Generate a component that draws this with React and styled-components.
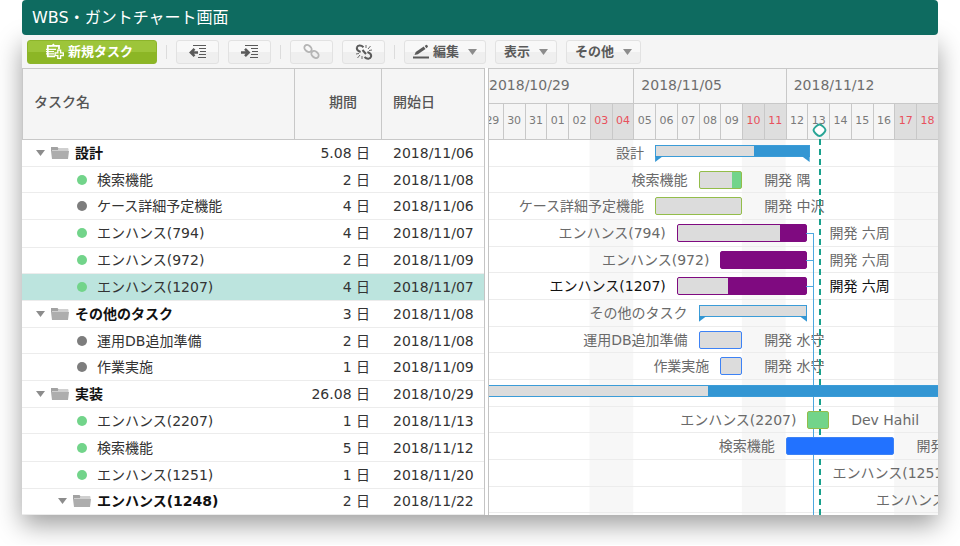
import React, { useState } from "react";
import styled, { createGlobalStyle } from "styled-components";

const GlobalStyle = createGlobalStyle`
  * {
    box-sizing: border-box;
  }
  body {
    margin: 0;
    background: #fff;
    overflow-x: hidden;
    font-family: "DejaVu Sans", "Noto Sans CJK JP", sans-serif;
    font-size: 14px;
    line-height: 18px;
    color: #333;
  }
  button {
    font-family: inherit;
    cursor: pointer;
  }
`;

//page frame
const Page = styled.main`
  padding: 0 22px 30px;
`;

const TitleBar = styled.h1`
  position: relative;
  z-index: 1;
  margin: 0;
  padding: 0 10px;
  background: #0e6b60;
  border-radius: 4px;
  color: #fff;
  font-size: 16px;
  font-weight: 400;
  line-height: 35px;
`;

const Panel = styled.section`
  background: #fff;
  box-shadow: 0 10px 24px rgba(0, 0, 0, 0.38);
`;

//toolbar
const Toolbar = styled.div`
  display: flex;
  align-items: center;
  gap: 9px;
  height: 33px;
  padding: 0 5px;
  background: #f5f5f5;
`;

const Separator = styled.span`
  width: 1px;
  height: 14px;
  background: #dcdcdc;
`;

const ToolButton = styled.button`
  display: flex;
  align-items: center;
  justify-content: center;
  gap: 9px;
  height: 24px;
  min-width: 43px;
  padding: 0 8px;
  border: 1px solid #e2e2e2;
  border-radius: 3px;
  background: linear-gradient(#f8f8f8 50%, #efefef 50%);
  color: #5a5a5a;
  font-size: 13px;
  font-weight: 700;
  line-height: 18px;

  svg {
    flex: none;
  }
  &:disabled {
    color: #b5b5b5;
    cursor: default;
  }
`;

const IconText = styled.span`
  display: flex;
  align-items: center;
  gap: 4px;
`;

const NewTaskButton = styled(ToolButton)`
  padding: 0 23px 0 18px;
  border-color: #8db52b;
  background: linear-gradient(#9dc53a 50%, #8cb625 50%);
  color: #fff;
`;

//split view
const Split = styled.div`
  display: grid;
  grid-template-columns: minmax(0, 463fr) minmax(0, 453fr);
`;

const TaskTable = styled.table`
  width: 100%;
  table-layout: fixed;
  border-collapse: separate;
  border-spacing: 0;
  border-right: 1px solid #c4c4c4;
`;

const HeadCell = styled.th`
  width: ${(props) => props.$width};
  height: 72px;
  padding: 0 ${(props) => (props.$end ? "24px" : "11px")} 4px 11px;
  border-top: 1px solid #c8c8c8;
  border-bottom: 1px solid #c8c8c8;
  border-left: 1px solid #c8c8c8;
  background: #f5f5f5;
  color: #555;
  font-weight: 500;
  text-align: ${(props) => (props.$end ? "right" : "left")};
`;

const TaskRow = styled.tr`
  height: 27px;
  background: ${(props) => (props.$selected ? "#bce4de" : "#fff")};
  cursor: pointer;

  &:nth-child(3n + 2) {
    height: 26px;
  }
`;

const Cell = styled.td`
  padding: 0 11px 0 12px;
  border-bottom: 1px solid #ececec;
  text-align: ${(props) => (props.$end ? "right" : "left")};
  white-space: nowrap;
`;

const NameCell = styled(Cell)`
  padding: 0 0 0 ${(props) => props.$indent}px;
`;

const TaskName = styled.div`
  display: flex;
  align-items: center;
  gap: ${(props) => (props.$group ? "6px" : "10px")};
  color: ${(props) => (props.$group ? "#111" : "#333")};
  font-weight: ${(props) => (props.$group ? 700 : 400)};
`;

const Toggle = styled.button`
  display: flex;
  padding: 0;
  border: 0;
  background: none;
`;

const Dot = styled.span`
  width: 10px;
  height: 10px;
  border-radius: 50%;
  background: ${(props) => (props.$active ? "#72d48a" : "#7d7d7d")};
`;

//gantt chart
const Chart = styled.div`
  margin-left: 3px;
  border-left: 1px solid #c4c4c4;
  overflow: hidden;
`;

const Timeline = styled.div`
  margin-left: -8px;
`;

const Weeks = styled.div`
  display: grid;
  grid-template-columns: repeat(3, 1fr);
  height: 72px;
  border-top: 1px solid #c8c8c8;
  border-bottom: 1px solid #c8c8c8;
  background: #f5f5f5;
`;

const Week = styled.div`
  display: grid;
  grid-template-rows: 35px 35px;
`;

const WeekLabel = styled.div`
  padding-left: 7px;
  border-bottom: 1px solid #c8c8c8;
  border-left: 1px solid #c8c8c8;
  color: #6e6e6e;
  line-height: 33px;
`;

const Days = styled.div`
  display: grid;
  grid-template-columns: repeat(7, 1fr);
`;

const Day = styled.div`
  border-left: 1px solid #c8c8c8;
  background: ${(props) => (props.$weekend ? "#dedede" : "#f5f5f5")};
  color: ${(props) => (props.$weekend ? "#e8515c" : "#7a7a7a")};
  font-size: 11px;
  line-height: 33px;
  text-align: center;
`;

const ChartBody = styled.div`
  position: relative;
  padding-bottom: 2px;
  background: linear-gradient(90deg, transparent 71.4%, #f7f7f7 71.4%) 0 0 /
    33.33% 100%;
`;

const ChartRow = styled.div`
  display: flex;
  align-items: center;
  height: 27px;
  border-bottom: 1px solid #ececec;
  color: ${(props) => (props.$selected ? "#111" : "#6a6a6a")};
  white-space: nowrap;

  &:nth-child(3n + 2) {
    height: 26px;
  }
`;

const Label = styled.span`
  flex: none;
  width: ${(props) => (props.$days / 21) * 100}%;
  padding-right: 11px;
  text-align: right;
`;

const Bar = styled.span`
  position: relative;
  z-index: 2;
  flex: none;
  width: ${(props) => (props.$days / 21) * 100}%;
  height: 18px;
  border: 1px solid ${(props) => props.$line};
  border-radius: 2px;
  background: linear-gradient(
    90deg,
    #dcdcdc ${(props) => props.$rest}%,
    ${(props) => props.$fill} ${(props) => props.$rest}%
  );

  &::after {
    content: "";
    display: ${(props) => (props.$linked ? "block" : "none")};
    position: absolute;
    top: 8px;
    left: 100%;
    width: 7px;
    height: 1px;
    background: #4fa8e0;
  }
`;

const SummaryBar = styled(Bar)`
  align-self: flex-start;
  height: 12px;
  margin-top: 5px;
  border-radius: 0;

  &::before,
  &::after {
    content: "";
    display: block;
    position: absolute;
    top: 10px;
    width: 8px;
    height: 6px;
    background: #3396d3;
  }
  &::before {
    left: -1px;
    clip-path: polygon(0 0, 100% 0, 0 100%);
  }
  &::after {
    left: auto;
    right: -1px;
    clip-path: polygon(0 0, 100% 0, 100% 100%);
  }
`;

const Assignee = styled.span`
  padding-left: 22px;
`;

const LinkLine = styled.span`
  position: absolute;
  top: 93px;
  bottom: 0;
  left: calc(${(15 / 21) * 100}% + 6px);
  width: 1px;
  background: #4fa8e0;
`;

const TodayLine = styled.span`
  position: absolute;
  z-index: 1;
  top: -1px;
  bottom: 0;
  left: calc(${(15.5 / 21) * 100}% + 1px);
  width: 2px;
  background: repeating-linear-gradient(#17a08c 0 6px, transparent 6px 10px);
`;

const TodayPin = styled.svg`
  position: absolute;
  z-index: 3;
  top: -17px;
  left: calc(${(15.5 / 21) * 100}% - 6px);
`;

const COLORS = {
  summary: { line: "#3b9cd8", fill: "#3396d3" },
  green: { line: "#93bd4a", fill: "#72d48a" },
  purple: { line: "#7f0a80", fill: "#7f0a80" },
  blue: { line: "#3d82f5", fill: "#2272ff" },
};

// start and span are in days from 2018/10/29, rest is the grey part in percent
const tasks = [
  { name: "設計", group: true, level: 0, days: "5.08", date: "2018/11/06", start: 8, span: 7.1, rest: 64 },
  { name: "検索機能", active: true, days: "2", date: "2018/11/08", start: 10, span: 2, rest: 78, color: "green", who: "開発 隅" },
  { name: "ケース詳細予定機能", days: "4", date: "2018/11/06", start: 8, span: 4, rest: 100, color: "green", who: "開発 中沢" },
  { name: "エンハンス(794)", active: true, days: "4", date: "2018/11/07", start: 9, span: 6, rest: 80, color: "purple", who: "開発 六周", linked: true },
  { name: "エンハンス(972)", active: true, days: "2", date: "2018/11/09", start: 11, span: 4, rest: 0, color: "purple", who: "開発 六周", linked: true },
  { name: "エンハンス(1207)", active: true, days: "4", date: "2018/11/07", start: 9, span: 6, rest: 39, color: "purple", who: "開発 六周", linked: true },
  { name: "その他のタスク", group: true, level: 0, days: "3", date: "2018/11/08", start: 10, span: 5, rest: 100 },
  { name: "運用DB追加準備", days: "2", date: "2018/11/08", start: 10, span: 2, rest: 100, color: "blue", who: "開発 水守" },
  { name: "作業実施", days: "1", date: "2018/11/09", start: 11, span: 1, rest: 100, color: "blue", who: "開発 水守" },
  { name: "実装", group: true, level: 0, days: "26.08", date: "2018/10/29", start: 0, span: 26, rest: 40, hideLabel: true },
  { name: "エンハンス(2207)", active: true, days: "1", date: "2018/11/13", start: 15, span: 1, rest: 0, color: "green", who: "Dev Hahil" },
  { name: "検索機能", active: true, days: "5", date: "2018/11/12", start: 14, span: 5, rest: 0, color: "blue", who: "開発 隅" },
  { name: "エンハンス(1251)", active: true, days: "1", date: "2018/11/20", start: 22, span: 1, rest: 0, color: "green" },
  { name: "エンハンス(1248)", group: true, level: 1, days: "2", date: "2018/11/22", start: 24, span: 2, rest: 0 },
];

const weeks = [
  { label: "2018/10/29", days: ["29", "30", "31", "01", "02", "03", "04"] },
  { label: "2018/11/05", days: ["05", "06", "07", "08", "09", "10", "11"] },
  { label: "2018/11/12", days: ["12", "13", "14", "15", "16", "17", "18"] },
];

//icons
const NewTaskIcon = () => (
  <svg width="18" height="17" viewBox="0 0 18 17" fill="none" stroke="#fff">
    <path d="M4.500 2.800H1.800v10.500H9M10 2.800h3v3.500" strokeWidth="1.800" />
    <path d="M4 3.800V2h2L7.400.500 8.800 2h2v1.800z" fill="#fff" stroke="none" />
    <path d="M0 6.300h10M0 8.600h8M0 10.900h8" strokeWidth="1.200" />
    <path
      d="M11.800 7.200h2.800v2.700h2.700v2.800h-2.700v2.700h-2.800v-2.700H9.100V9.900h2.700z"
      fill="#9dc53a"
      strokeWidth="1.300"
    />
  </svg>
);

const IndentIcon = ({ right }) => (
  <svg width="18" height="15" viewBox="0 0 18 15" fill="none" stroke="currentColor">
    <path d="M4 1.500h13M10 4.500h7M11 7.500h6M10 10.500h7M9 13.500h8" strokeWidth="1.100" />
    {right ? (
      <path d="M0 8.500h7M4 4.800l3.700 3.700L4 12.200" strokeWidth="2.500" />
    ) : (
      <path d="M9 8.500H2M5.500 4.800L1.800 8.500l3.700 3.700" strokeWidth="2.500" />
    )}
  </svg>
);

const LinkIcon = () => (
  <svg width="17" height="15" viewBox="0 0 17 15" fill="none" stroke="currentColor" strokeWidth="1.900">
    <ellipse cx="5" cy="4.500" rx="4" ry="3" transform="rotate(40 5 4.500)" />
    <ellipse cx="12" cy="10.500" rx="4" ry="3" transform="rotate(40 12 10.500)" />
  </svg>
);

const UnlinkIcon = () => (
  <svg width="18" height="16" viewBox="0 0 18 16" fill="none" stroke="currentColor" strokeWidth="2">
    <path d="M8.500 3.200C6 .6 2.600 1 2 3.200c-.6 2 1 3.800 3.600 4.800" />
    <path d="M9.500 13c2.500 2.500 5.900 2 6.500-.2.600-2-1-3.800-3.600-4.800" />
    <path d="M7.500 6l3.500 4" />
    <path d="M11 4V1M13 5l2.500-3M14 6.500l3-.5M7 12v3M5 11l-2.500 3M4 9.500l-3 .5" strokeWidth="0.900" />
  </svg>
);

const PencilIcon = () => (
  <svg width="16" height="15" viewBox="0 0 16 15" fill="currentColor">
    <path d="M1.500 11l1.200-3L10.700 2.600l1.800 2.400-7.600 5.200z" />
    <path d="M11.700 2l1.300-1a1 1 0 0 1 1.300.300l.500.700a1 1 0 0 1-.300 1.300L13.400 4.300z" />
    <path d="M0 12.500h16v2H0z" />
  </svg>
);

const Caret = () => (
  <svg width="9" height="6" viewBox="0 0 9 6" fill="#8c8c8c">
    <path d="M0 0h9L4.500 6z" />
  </svg>
);

const FolderIcon = () => (
  <svg width="18" height="12" viewBox="0 0 18 12">
    <path d="M0 0h6.500l1.200 1.500H17V4H0z" fill="#a2a2a2" />
    <path d="M7 1.500h10.500V4H1V3h6z" fill="#cfcfcf" />
    <path d="M0 4h18l-1 8H1z" fill="#adadad" />
  </svg>
);

const App = () => {
  const [selected, setSelected] = useState(5);

  return (
    <>
      <GlobalStyle />
      <Page>
        <TitleBar>WBS・ガントチャート画面</TitleBar>
        <Panel>
          <Toolbar>
            <NewTaskButton>
              <IconText>
                <NewTaskIcon />
                新規タスク
              </IconText>
            </NewTaskButton>
            <Separator />
            <ToolButton aria-label="Outdent">
              <IndentIcon />
            </ToolButton>
            <ToolButton aria-label="Indent">
              <IndentIcon right />
            </ToolButton>
            <Separator />
            <ToolButton aria-label="Link" disabled>
              <LinkIcon />
            </ToolButton>
            <ToolButton aria-label="Unlink">
              <UnlinkIcon />
            </ToolButton>
            <Separator />
            <ToolButton>
              <IconText>
                <PencilIcon />
                編集
              </IconText>
              <Caret />
            </ToolButton>
            <ToolButton>
              表示
              <Caret />
            </ToolButton>
            <ToolButton>
              その他
              <Caret />
            </ToolButton>
          </Toolbar>

          <Split>
            <TaskTable>
              <thead>
                <tr>
                  <HeadCell>タスク名</HeadCell>
                  <HeadCell $width="87px" $end>
                    期間
                  </HeadCell>
                  <HeadCell $width="103px">開始日</HeadCell>
                </tr>
              </thead>
              <tbody>
                {tasks.map((task, index) => (
                  <TaskRow
                    key={index}
                    $selected={index === selected}
                    onClick={() => setSelected(index)}
                  >
                    <NameCell $indent={task.group ? 14 + task.level * 22 : 55}>
                      <TaskName $group={task.group}>
                        {task.group ? (
                          <>
                            <Toggle aria-label={task.name}>
                              <Caret />
                            </Toggle>
                            <FolderIcon />
                          </>
                        ) : (
                          <Dot $active={task.active} />
                        )}
                        {task.name}
                      </TaskName>
                    </NameCell>
                    <Cell $end>{task.days} 日</Cell>
                    <Cell>{task.date}</Cell>
                  </TaskRow>
                ))}
              </tbody>
            </TaskTable>

            <Chart>
              <Timeline>
                <Weeks>
                  {weeks.map((week) => (
                    <Week key={week.label}>
                      <WeekLabel>{week.label}</WeekLabel>
                      <Days>
                        {week.days.map((day, index) => (
                          <Day key={day} $weekend={index > 4}>
                            {day}
                          </Day>
                        ))}
                      </Days>
                    </Week>
                  ))}
                </Weeks>
                <ChartBody>
                  {tasks.map((task, index) => {
                    const color = COLORS[task.color || "summary"];
                    const TaskBar = task.group ? SummaryBar : Bar;
                    return (
                      <ChartRow key={index} $selected={index === selected}>
                        {!task.hideLabel && (
                          <Label $days={task.start}>{task.name}</Label>
                        )}
                        <TaskBar
                          $days={task.span}
                          $rest={task.rest}
                          $line={color.line}
                          $fill={color.fill}
                          $linked={task.linked}
                        />
                        {task.who && <Assignee>{task.who}</Assignee>}
                      </ChartRow>
                    );
                  })}
                  <LinkLine />
                  <TodayLine />
                  <TodayPin width="15" height="15" viewBox="0 0 15 15">
                    <path
                      d="M7.500 1.500c1.800 0 6 3.800 6 5.600s-4.200 6-6 6-6-4.200-6-6 4.200-5.600 6-5.600z"
                      fill="#fff"
                      stroke="#2aa596"
                      strokeWidth="2"
                    />
                  </TodayPin>
                </ChartBody>
              </Timeline>
            </Chart>
          </Split>
        </Panel>
      </Page>
    </>
  );
};

export default App;
